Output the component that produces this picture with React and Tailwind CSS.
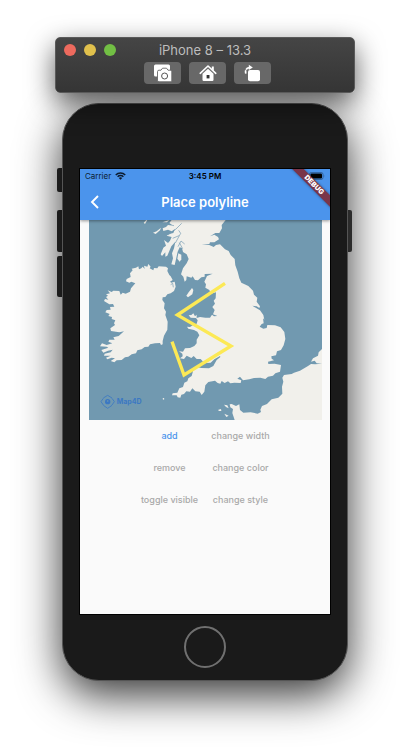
import React from 'react';

const titleButton =
  'flex h-[22px] w-[37px] items-center justify-center rounded-[4px] bg-[#686868] text-white';

function CameraIcon() {
  return (
    <svg width="20" height="20" viewBox="0 0 20 20" aria-hidden="true">
      <rect x="1" y="1.5" width="16" height="12" rx="1.5" fill="currentColor" />
      <path
        d="M4.5 8.7Q4.5 7.2 6 7.2H8L9.5 5.2H13.5L15 7.2H17.3Q18.8 7.2 18.8 8.7V17.3Q18.8 18.8 17.3 18.8H6Q4.5 18.8 4.5 17.3Z"
        fill="currentColor"
        stroke="#686868"
        strokeWidth="0.9"
      />
      <circle cx="11.6" cy="13" r="3" fill="none" stroke="#555" strokeWidth="1" />
    </svg>
  );
}

function HomeIcon() {
  return (
    <svg width="18" height="18" viewBox="0 0 18 18" aria-hidden="true">
      <path d="M12.8 2.5H14.8V7L12.8 5Z" fill="currentColor" />
      <path d="M1.2 9.3L9 2L16.8 9.3" fill="none" stroke="currentColor" strokeWidth="1.6" strokeLinecap="round" strokeLinejoin="round" />
      <path d="M3.5 9.8L9 4.8L14.5 9.8V15.8Q14.5 17 13.3 17H4.7Q3.5 17 3.5 15.8Z" fill="currentColor" />
      <rect x="7.6" y="11" width="2.9" height="3.4" fill="#333" />
    </svg>
  );
}

function RotateIcon() {
  return (
    <svg width="18" height="18" viewBox="0 0 18 18" aria-hidden="true">
      <rect x="4" y="6" width="12" height="11.2" rx="2" fill="currentColor" />
      <path d="M1.8 9.6C0.9 6.2 2.4 3.7 5.4 3.6" fill="none" stroke="currentColor" strokeWidth="1.7" strokeDasharray="3.4 0.7 9" />
      <path d="M4.8 0.8L8.8 3.6L4.8 6Z" fill="currentColor" />
    </svg>
  );
}

function WifiIcon() {
  return (
    <svg width="11" height="8" viewBox="0 0 22 16" fill="none" stroke="currentColor" strokeWidth="2.8" aria-hidden="true">
      <path d="M1.5 6C6.5 0.6 15.5 0.6 20.5 6" />
      <path d="M5.2 9.6C8.2 6.3 13.8 6.3 16.8 9.6" />
      <path d="M11 15.5L7.6 12Q11 9 14.4 12Z" fill="currentColor" stroke="none" />
    </svg>
  );
}

function BatteryIcon() {
  return (
    <svg width="16" height="8" viewBox="0 0 16 8" aria-hidden="true">
      <rect x="0.5" y="0.5" width="13.5" height="7" rx="1.8" fill="none" stroke="#000" strokeOpacity="0.3" />
      <rect x="1.5" y="1.5" width="11.5" height="5" rx="1" fill="#000" />
      <path d="M14.8 2.8Q16 4 14.8 5.2Z" fill="#000" fillOpacity="0.4" />
    </svg>
  );
}

function PolylineMap() {
  return (
    <svg viewBox="27 15 699 600" className="block w-full" role="img" aria-label="Map of Britain and Ireland with a polyline">
      <rect x="27" y="15" width="699" height="600" fill="#7199b0" />
      <g fill="#f1f0eb">
        <path d="M205 147L212 155L209 160L220 166L222 159L232 160L236 154L258 155L264 160L262 168L268 180L272 184L278 195L270 200L274 203L284 200L287 215L282 228L272 235L262 238L256 246L248 247L247 255L254 265L252 280L258 290L256 300L263 320L262 344L252 362L248 378L248 388L243 390L240 384L225 385L210 388L205 395L194 396L185 403L172 406L168 415L155 418L145 425L135 427L125 435L110 436L103 442L92 438L105 430L95 428L82 433L78 428L92 422L72 422L74 416L92 412L98 404L84 407L70 413L64 405L85 398L80 395L60 394L66 385L80 390L97 385L85 380L88 374L104 374L100 367L116 363L132 349L118 352L93 348L91 340L105 330L102 325L106 316L95 312L96 306L85 303L89 297L76 292L80 285L92 284L90 276L103 275L99 267L88 268L72 258L75 252L85 254L78 246L84 242L78 238L90 235L83 226L95 231L100 227L118 228L122 239L128 233L137 236L150 230L153 220L166 205L154 200L148 203L138 199L140 192L152 186L150 175L158 166L155 161L168 158L175 154L177 163L184 160L188 155L194 162L192 152L202 155Z" />
        <path d="M275 15L268 24L276 30L264 30L258 36L248 40L250 48L264 44L275 49L285 42L280 54L268 57L260 62L275 66L270 77L264 84L252 75L258 92L250 98L242 118L246 123L256 112L256 125L262 122L268 108L274 94L286 80L282 100L276 115L279 130L274 148L284 150L289 128L293 110L299 97L306 99L309 111L320 118L326 132L320 145L309 160L303 178L310 185L314 200L319 195L320 184L334 188L338 184L345 195L354 196L364 187L374 185L374 177L398 176L381 183L373 200L378 208L376 218L388 225L392 236L408 232L407 250L401 257L405 266L397 276L404 285L399 298L412 303L402 304L396 299L390 308L376 308L360 306L350 309L350 299L345 304L340 295L334 300L326 301L332 308L348 309L353 316L350 326L338 331L330 336L321 335L325 341L342 345L352 350L358 361L350 374L350 385L343 393L330 399L315 400L309 410L297 409L307 416L308 424L300 430L312 432L320 422L334 429L341 423L350 432L362 432L370 441L379 444L392 443L403 433L420 423L421 426L410 435L400 453L387 460L364 459L352 457L340 465L335 483L325 490L322 499L313 503L309 516L298 520L292 533L278 535L276 541L290 541L293 547L301 548L304 539L312 537L319 529L330 530L337 520L346 529L359 530L365 540L373 530L376 511L385 501L405 497L413 504L421 506L425 498L434 504L444 499L451 505L463 503L482 504L484 496L472 491L480 485L489 496L508 493L522 489L541 488L556 492L564 485L579 482L586 475L600 470L603 450L584 446L565 447L564 440L582 436L575 431L574 424L588 421L591 409L603 405L611 391L616 372L613 351L602 337L585 331L562 330L560 339L550 341L539 335L545 327L551 325L549 310L553 314L550 300L540 286L517 272L530 274L538 279L540 274L530 260L532 248L522 239L519 227L505 213L484 203L478 190L473 170L466 151L464 132L452 120L446 108L435 103L420 88L408 90L401 96L388 90L365 89L388 87L390 82L403 82L417 73L414 66L403 59L390 64L406 54L418 54L426 40L425 30L437 15Z" />
        <path d="M726 402L716 412L714 422L699 430L693 440L704 437L710 445L726 446L705 448L693 447L684 453L660 467L642 473L635 477L612 480L607 488L610 500L606 515L607 536L595 548L575 553L561 567L546 573L541 584L543 591L533 596L512 592L490 593L480 585L478 568L468 573L455 567L449 568L451 577L459 582L457 594L464 615H726Z" />
        <path d="M336 219L340 225L337 238L324 247L319 242L326 232Z" />
        <path d="M295 115L304 119L304 133L299 140L292 131Z" />
        <path d="M219 53L230 49L243 38L240 46L227 57Z" />
        <path d="M191 23L199 15H202L195 27ZM247 22L268 15L261 22Z" />
        <path d="M415 584L423 582L424 588L416 588ZM432 569L442 571L446 580L438 576ZM433 596L446 602L439 606Z" />
        <path d="M248 550L252 549L253 553L249 554Z" />
      </g>
      <g fill="none" stroke="#7199b0" strokeWidth="2" strokeLinejoin="round">
        <path d="M264 60L288 42L305 25M278 70L297 62M286 84L302 55L296 46M294 95L303 78L314 87M280 217L278 205L272 209" />
        <path d="M308 101L298 83M256 27L282 32" />
      </g>
      <polyline points="435,205 292,300 453,393 312,480 276,380" fill="none" stroke="#fce955" strokeWidth="10" />
      <g fill="none" stroke="#3b78c3" strokeWidth="2.5">
        <path d="M70 549L83 541L96 549M70 571L83 580L96 571M70 550L63 560L70 570M96 550L103 560L96 570" />
        <circle cx="83" cy="560" r="8" fill="#3b78c3" stroke="none" />
        <circle cx="83" cy="558" r="2.5" fill="#7199b0" stroke="none" />
      </g>
      <text x="110" y="567" fill="#3b78c3" fontFamily="Inter, sans-serif" fontSize="21" fontWeight="700">
        Map4D
      </text>
    </svg>
  );
}

function TitleBar() {
  return (
    <header className="relative z-30 mx-auto w-full max-w-[300px] rounded-[5px] border border-[#5a5a5a] bg-linear-to-b from-[#454545] to-[#353535] pb-2 shadow-[0_10px_28px_rgba(0,0,0,0.65)]">
      <div className="grid h-[24px] grid-cols-[1fr_auto_1fr] items-center px-2">
        <div className="flex gap-2">
          <button aria-label="Close" className="size-3 rounded-full bg-[#ed6a5e]" />
          <button aria-label="Minimize" className="size-3 rounded-full bg-[#e0c04c]" />
          <button aria-label="Zoom" className="size-3 rounded-full bg-[#72bf44]" />
        </div>
        <h1 className="text-[13px] leading-4 text-[#bdbdbd]">iPhone 8 – 13.3</h1>
      </div>
      <div className="flex justify-center gap-2 pl-[5px]">
        <button aria-label="Screenshot" className={titleButton}><CameraIcon /></button>
        <button aria-label="Home" className={titleButton}><HomeIcon /></button>
        <button aria-label="Rotate" className={titleButton}><RotateIcon /></button>
      </div>
    </header>
  );
}

const actions = ['add', 'change width', 'remove', 'change color', 'toggle visible', 'change style'];

function Screen() {
  return (
    <main className="relative aspect-[250/445] overflow-hidden bg-[#fafafa] outline-1 outline-black">
      <div className="relative bg-[#4b94ec] shadow-[0_1px_3px_rgba(0,0,0,0.4)]">
        <div className="grid h-[14px] grid-cols-3 items-center px-[5px] text-[8px] leading-[14px] text-[#0c1c30]">
          <span className="flex items-center gap-1">Carrier <WifiIcon /></span>
          <span className="text-center font-semibold text-black">3:45 PM</span>
          <span className="flex justify-end"><BatteryIcon /></span>
        </div>
        <div className="grid h-[37px] grid-cols-[1fr_auto_1fr] items-center px-[10px] text-white">
          <button aria-label="Back" className="justify-self-start">
            <svg width="10" height="14" viewBox="0 0 10 14" fill="none" stroke="currentColor" strokeWidth="1.9" aria-hidden="true">
              <path d="M8 1L2 7L8 13" />
            </svg>
          </button>
          <h2 className="text-[13px] font-semibold leading-4">Place polyline</h2>
        </div>
      </div>
      <div className="pl-[9px] pr-2">
        <PolylineMap />
      </div>
      <div className="grid grid-cols-[60px_60px] justify-center gap-x-[11px]">
        {actions.map((name) => (
          <button
            key={name}
            disabled={name !== 'add'}
            className="h-8 whitespace-nowrap text-[9px] font-medium leading-3 text-[#4b94ec] disabled:text-[#a9a9a9]"
          >
            {name}
          </button>
        ))}
      </div>
      <div className="absolute right-[-24px] top-[12px] h-[8px] w-[80px] rotate-45 bg-[#7a3549] text-center text-[7px] font-black leading-[8px] text-white shadow-[0_0_3px_rgba(0,0,0,0.4)]">
        DEBUG
      </div>
    </main>
  );
}

export default function App() {
  return (
    <div className="min-h-screen overflow-hidden bg-white px-4 pt-[37px] font-[Inter,sans-serif]">
      <TitleBar />
      <div className="mx-auto mt-[10px] flex w-full max-w-[296px]">
        <div className="flex w-[5px] flex-col pt-[65px]">
          <span className="h-6 rounded-l-[2px] bg-[#2c2c2c]" />
          <span className="mt-[18px] h-[42px] rounded-l-[2px] bg-[#2c2c2c]" />
          <span className="mt-1 h-[41px] rounded-l-[2px] bg-[#2c2c2c]" />
        </div>
        <div className="min-w-0 flex-1 rounded-[37px] border border-[#555] bg-[#1a1a1a] px-[17px] pb-3 pt-[65px] shadow-[0_14px_44px_rgba(0,0,0,0.8)]">
          <Screen />
          <button aria-label="Home" className="mx-auto mt-3 block size-[42px] rounded-full border-2 border-[#707070]" />
        </div>
        <div className="flex w-[5px] flex-col pt-[107px]">
          <span className="h-[42px] w-1 rounded-r-[2px] bg-[#2c2c2c]" />
        </div>
      </div>
    </div>
  );
}
